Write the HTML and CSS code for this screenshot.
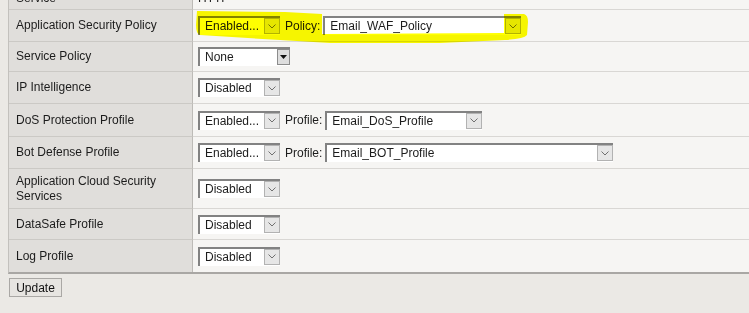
FILE: index.html
```html
<!DOCTYPE html>
<html lang="en">
<head>
  <meta charset="UTF-8" />
  <title>Security Policies</title>
  <link rel="stylesheet" href="styles.css">
</head>
<body>
  <div class="panel">
    <div class="props">
      <div class="row row-top">
        <div class="label">Service</div>
        <div class="value">HTTP</div>
      </div>

      <div class="row">
        <div class="label">Application Security Policy</div>
        <div class="value">
          <span class="select"><span class="select-text">Enabled...</span><span class="select-btn"><svg width="8" height="5" viewBox="0 0 8 5"><polyline points="0.5,0.5 4,4 7.5,0.5" /></svg></span></span>
          <span class="field-label">Policy:</span>
          <span class="select select-policy"><span class="select-text">Email_WAF_Policy</span><span class="select-btn"><svg width="8" height="5" viewBox="0 0 8 5"><polyline points="0.5,0.5 4,4 7.5,0.5" /></svg></span></span>
        </div>
      </div>

      <div class="row row-s">
        <div class="label">Service Policy</div>
        <div class="value">
          <span class="select select-svc"><span class="select-text">None</span><span class="select-btn btn-solid"><svg width="7" height="4" viewBox="0 0 7 4"><polygon points="0,0 7,0 3.5,4" /></svg></span></span>
        </div>
      </div>

      <div class="row">
        <div class="label">IP Intelligence</div>
        <div class="value">
          <span class="select"><span class="select-text">Disabled</span><span class="select-btn"><svg width="8" height="5" viewBox="0 0 8 5"><polyline points="0.5,0.5 4,4 7.5,0.5" /></svg></span></span>
        </div>
      </div>

      <div class="row row-m">
        <div class="label">DoS Protection Profile</div>
        <div class="value">
          <span class="select"><span class="select-text">Enabled...</span><span class="select-btn"><svg width="8" height="5" viewBox="0 0 8 5"><polyline points="0.5,0.5 4,4 7.5,0.5" /></svg></span></span>
          <span class="field-label">Profile:</span>
          <span class="select select-dos"><span class="select-text">Email_DoS_Profile</span><span class="select-btn"><svg width="8" height="5" viewBox="0 0 8 5"><polyline points="0.5,0.5 4,4 7.5,0.5" /></svg></span></span>
        </div>
      </div>

      <div class="row">
        <div class="label">Bot Defense Profile</div>
        <div class="value">
          <span class="select"><span class="select-text">Enabled...</span><span class="select-btn"><svg width="8" height="5" viewBox="0 0 8 5"><polyline points="0.5,0.5 4,4 7.5,0.5" /></svg></span></span>
          <span class="field-label">Profile:</span>
          <span class="select select-bot"><span class="select-text">Email_BOT_Profile</span><span class="select-btn"><svg width="8" height="5" viewBox="0 0 8 5"><polyline points="0.5,0.5 4,4 7.5,0.5" /></svg></span></span>
        </div>
      </div>

      <div class="row row-l">
        <div class="label">Application Cloud Security Services</div>
        <div class="value">
          <span class="select"><span class="select-text">Disabled</span><span class="select-btn"><svg width="8" height="5" viewBox="0 0 8 5"><polyline points="0.5,0.5 4,4 7.5,0.5" /></svg></span></span>
        </div>
      </div>

      <div class="row row-x">
        <div class="label">DataSafe Profile</div>
        <div class="value">
          <span class="select"><span class="select-text">Disabled</span><span class="select-btn"><svg width="8" height="5" viewBox="0 0 8 5"><polyline points="0.5,0.5 4,4 7.5,0.5" /></svg></span></span>
        </div>
      </div>

      <div class="row row-last">
        <div class="label">Log Profile</div>
        <div class="value">
          <span class="select"><span class="select-text">Disabled</span><span class="select-btn"><svg width="8" height="5" viewBox="0 0 8 5"><polyline points="0.5,0.5 4,4 7.5,0.5" /></svg></span></span>
        </div>
      </div>
    </div>

    <button type="button" class="btn">Update</button>

    <!-- highlighter stroke drawn over the first policy row -->
    <svg class="marker" width="749" height="60" viewBox="0 0 749 60">
      <path d="M197,11 L285,12 L322,14 L322,34 L504,33 L504,14 L524,14 Q528,15 528,22 L527,35 Q524,39 505,40 L440,43 L330,43 L280,40 L200,35 Q196,34 196,25 Z" />
    </svg>
  </div>
</body>
</html>
```

FILE: styles.css
```css
* {
  box-sizing: border-box;
}

body {
  margin: 0;
  background: #ebe9e5;
  font-family: "Liberation Sans", Arial, sans-serif;
  font-size: 12px;
  color: #1c1c1c;
}

.panel {
  display: flow-root;
  position: relative;
  padding-left: 8px;
  min-height: 313px;
}

.props {
  margin-top: -13px;
  width: 760px;
  border-left: 1px solid #c3c1bd;
  border-bottom: 2px solid #a9a7a4;
}

.row {
  display: grid;
  grid-template-columns: 184px 1fr;
  height: 32px;
}

.row-top { height: 23px; }
.row-s { height: 30px; }
.row-m { height: 33px; }
.row-l { height: 40px; }
.row-x { height: 31px; }

.label {
  display: flex;
  align-items: center;
  padding: 0 7px;
  line-height: 15px;
  background: #e0dedb;
  border-right: 1px solid #bdbbb7;
  border-bottom: 1px solid #cbc9c5;
}

.value {
  display: flex;
  align-items: center;
  padding-left: 5px;
  background: #f6f5f3;
  border-bottom: 1px solid #d9d7d4;
}

.row-last .label,
.row-last .value {
  border-bottom: none;
}

.field-label {
  margin: 0 3px 0 5px;
}

.select {
  display: inline-flex;
  width: 82px;
  height: 19px;
  background: #fff;
  border-top: 2px solid #828282;
  border-left: 2px solid #828282;
}

.select-policy { width: 198px; }
.select-dos { width: 157px; }
.select-bot { width: 288px; }
.select-svc { width: 92px; }

.select-text {
  flex: 1;
  padding-left: 5px;
  line-height: 16px;
  white-space: nowrap;
  overflow: hidden;
}

.select-btn {
  width: 16px;
  margin-bottom: 1px;
  display: flex;
  align-items: center;
  justify-content: center;
  background: #e6e6e6;
  border: 1px solid #b2b2b2;
}

.select-btn polyline {
  fill: none;
  stroke: #707070;
  stroke-width: 1;
}

.btn-solid {
  width: 13px;
  background: #dedede;
  border: 1px solid #8c8c8c;
}

.btn-solid polygon {
  fill: #111;
}

.btn {
  display: block;
  margin: 4px 0 0 1px;
  width: 53px;
  height: 19px;
  padding: 0;
  font-family: inherit;
  font-size: 12px;
  color: #111;
  background: #e7e5e1;
  border: 1px solid #aaa8a5;
  border-radius: 0;
}

.marker {
  position: absolute;
  top: 0;
  left: 0;
  pointer-events: none;
  mix-blend-mode: multiply;
}

.marker path {
  fill: #ffff00;
}
```
